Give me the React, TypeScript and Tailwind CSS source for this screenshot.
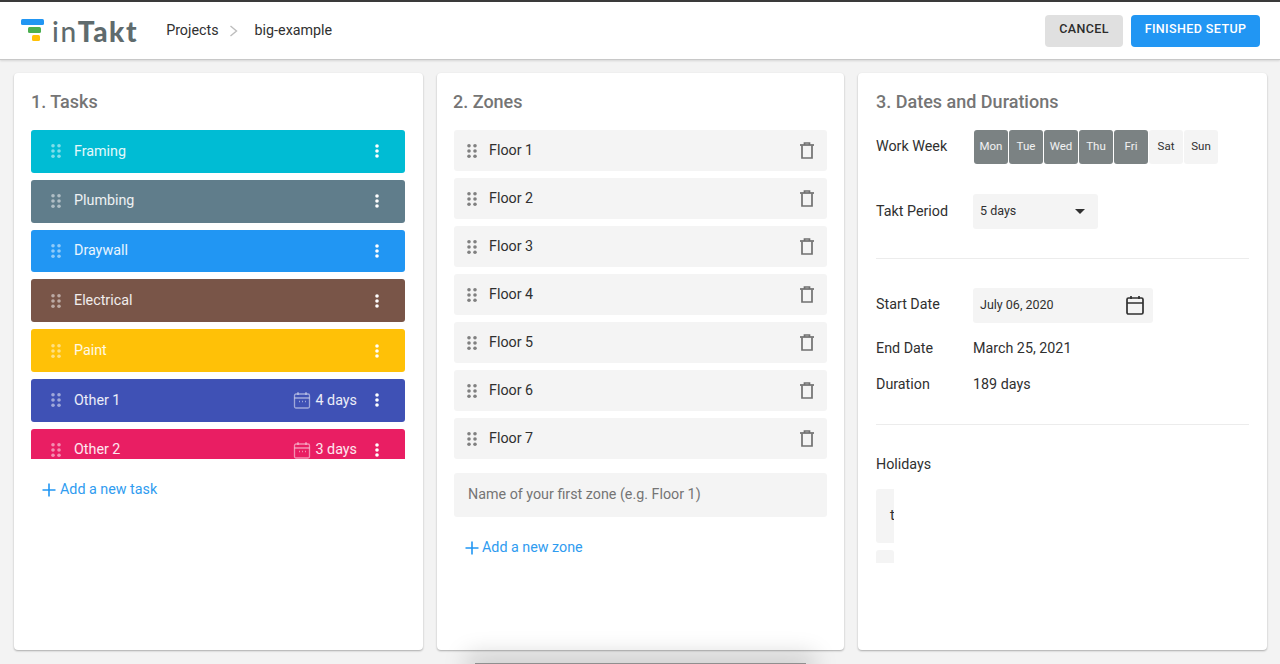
import React from "react";

const tasks = [
  { name: "Framing", color: "bg-[#00bcd4]" },
  { name: "Plumbing", color: "bg-[#607d8b]" },
  { name: "Draywall", color: "bg-[#2196f3]" },
  { name: "Electrical", color: "bg-[#795548]" },
  { name: "Paint", color: "bg-[#ffc107]" },
  { name: "Other 1", color: "bg-[#3f51b5]", days: "4 days" },
  { name: "Other 2", color: "bg-[#e91e63]", days: "3 days" },
];
const floors = ["Floor 1", "Floor 2", "Floor 3", "Floor 4", "Floor 5", "Floor 6", "Floor 7"];
const days = [
  ["Mon", true], ["Tue", true], ["Wed", true], ["Thu", true], ["Fri", true], ["Sat", false], ["Sun", false],
] as const;

function Grip({ className }: { className: string }) {
  return (
    <svg width="10" height="14" viewBox="0 0 10 14" className={className} fill="currentColor">
      {[1.8, 7, 12.2].map((y) => (
        <g key={y}>
          <circle cx="2" cy={y} r="1.8" />
          <circle cx="8" cy={y} r="1.8" />
        </g>
      ))}
    </svg>
  );
}

function Kebab() {
  return (
    <svg width="4" height="14" viewBox="0 0 4 14" fill="white" className="shrink-0">
      <circle cx="2" cy="2" r="1.8" />
      <circle cx="2" cy="7" r="1.8" />
      <circle cx="2" cy="12" r="1.8" />
    </svg>
  );
}

function SmallCal() {
  return (
    <svg width="18" height="18" viewBox="0 0 18 18" fill="none" stroke="currentColor" strokeWidth="1.3" className="text-white/50 shrink-0">
      <rect x="1.5" y="3" width="15" height="14" rx="1.5" />
      <path d="M1.5 7h15M5 1v3M13 1v3" />
      <path d="M6 10.5h1M9 10.5h1M12 10.5h1" />
    </svg>
  );
}

function Trash() {
  return (
    <svg width="14" height="17" viewBox="0 0 14 17" fill="none" stroke="#707070" strokeWidth="1.7" className="shrink-0">
      <path d="M0 3h14" />
      <path d="M4.5 3V1h5v2" />
      <path d="M2 3.5V16h10V3.5" />
    </svg>
  );
}

function Plus() {
  return (
    <svg width="14" height="14" viewBox="0 0 14 14" stroke="#2196f3" strokeWidth="1.6" className="shrink-0">
      <path d="M7 0.5v13M0.5 7h13" />
    </svg>
  );
}

export default function App() {
  return (
    <div className="relative h-[664px] w-[1280px] overflow-hidden bg-[#f3f3f3] font-['Roboto',sans-serif] text-[#303030]">
      <header className="flex h-[60px] items-center justify-between border-t-2 border-b border-t-[#3a3a3a] border-b-[#c8c8c8] bg-white pl-[21px] pr-[20px] shadow-[0_1px_2px_rgba(0,0,0,0.12)]">
        <div className="flex items-center">
          <svg width="24" height="22" viewBox="0 0 24 22" className="shrink-0 -translate-y-[1px]">
            <rect x="0" y="0" width="23" height="6" rx="1.5" fill="#2196f3" />
            <rect x="7" y="8" width="13" height="6" rx="1.5" fill="#4caf50" />
            <rect x="11" y="16" width="8" height="6" rx="1.5" fill="#ffc107" />
          </svg>
          <span className="ml-[7px] font-['Lato',sans-serif] text-[28px] leading-none font-medium tracking-[1.6px] text-[#5f6b6d]">
            in<span className="font-black">Takt</span>
          </span>
          <span className="ml-[28px] text-[14.3px]">Projects</span>
          <svg width="10" height="12" viewBox="0 0 10 12" fill="none" stroke="#bdbdbd" strokeWidth="1.4" className="ml-[10px]">
            <path d="M1.5 1l6 5-6 5" />
          </svg>
          <span className="ml-[16px] text-[14.3px]">big-example</span>
        </div>
        <div className="flex items-center gap-2">
          <button className="h-[32px] w-[78px] rounded bg-[#e0e0e0] pb-[2px] text-[12.5px] font-medium tracking-[0.4px] text-[#2c2c2c]">CANCEL</button>
          <button className="h-[32px] w-[129px] rounded bg-[#2196f3] pb-[2px] text-[12.5px] font-medium tracking-[0.4px] text-white">FINISHED SETUP</button>
        </div>
      </header>

      <main className="flex gap-[14px] pl-[14px] pt-[13px]">
        <section className="h-[577px] w-[409px] rounded bg-white pl-[17px] pr-[18px] pt-[17px] shadow-[0_1px_2px_rgba(0,0,0,0.3)]">
          <h2 className="h-[40px] text-[18px] font-medium leading-[23px] text-[#757575]">1. Tasks</h2>
          <div className="h-[329px] overflow-hidden">
            <div className="flex flex-col gap-[7px]">
              {tasks.map((t) => (
                <div key={t.name} className={`flex h-[42.8px] shrink-0 items-center rounded-[3px] pl-[20px] pr-[26px] text-[14.3px] text-white/90 ${t.color}`}>
                  <Grip className="text-white/50" />
                  <span className="ml-[13px] flex-1">{t.name}</span>
                  {t.days && (
                    <span className="mr-[18px] flex items-center gap-[5px]">
                      <SmallCal />
                      {t.days}
                    </span>
                  )}
                  <Kebab />
                </div>
              ))}
            </div>
          </div>
          <div className="ml-[11px] mt-[20px] flex items-center gap-[4px] text-[14.3px] text-[#2f9cf0]">
            <Plus />
            Add a new task
          </div>
        </section>

        <section className="h-[577px] w-[407px] rounded bg-white px-[17px] pt-[17px] shadow-[0_1px_2px_rgba(0,0,0,0.3)]">
          <h2 className="-ml-px h-[40px] text-[18px] font-medium leading-[23px] text-[#757575]">2. Zones</h2>
          <div className="flex flex-col gap-[7px]">
            {floors.map((f) => (
              <div key={f} className="flex h-[41px] items-center rounded-[3px] bg-[#f4f4f4] pl-[13px] pr-[13px] text-[14.3px]">
                <Grip className="text-[#808080]" />
                <span className="ml-[12px] flex-1">{f}</span>
                <Trash />
              </div>
            ))}
          </div>
          <div className="mt-[14px] flex h-[44px] items-center rounded-[3px] bg-[#f4f4f4] pl-[14px] text-[14.3px] text-[#757575]">
            Name of your first zone (e.g. Floor 1)
          </div>
          <div className="ml-[11px] mt-[20px] flex items-center gap-[3px] text-[14.3px] text-[#2f9cf0]">
            <Plus />
            Add a new zone
          </div>
        </section>

        <section className="h-[577px] w-[409px] rounded bg-white px-[18px] pt-[17px] shadow-[0_1px_2px_rgba(0,0,0,0.3)]">
          <h2 className="h-[40px] text-[18px] font-medium leading-[23px] text-[#757575]">3. Dates and Durations</h2>
          <div className="flex items-start">
            <span className="w-[98px] pt-[6px] text-[14.3px] leading-[20px]">Work Week</span>
            <div className="flex gap-[1px]">
              {days.map(([d, on]) => (
                <span key={d} className={`flex h-[34px] w-[34px] items-center justify-center rounded-[3px] text-[11.5px] ${on ? "bg-[#7b8283] text-white/90" : "bg-[#f4f4f4] text-[#303030]"}`}>{d}</span>
              ))}
            </div>
          </div>
          <div className="mt-[30px] flex items-start">
            <span className="w-[97px] pt-[7px] text-[14.3px] leading-[20px]">Takt Period</span>
            <div className="flex h-[35px] w-[125px] items-center justify-between rounded-[3px] bg-[#f4f4f4] pl-[7px] pr-[13px] text-[12.5px]">
              5 days
              <svg width="10" height="5" viewBox="0 0 10 5" fill="#303030"><path d="M0 0h10L5 5z" /></svg>
            </div>
          </div>
          <div className="mt-[29px] h-px bg-[#ececec]" />
          <div className="mt-[29px] flex items-start">
            <span className="w-[97px] pt-[6px] text-[14.3px] leading-[20px]">Start Date</span>
            <div className="flex h-[35px] w-[180px] items-center justify-between rounded-[3px] bg-[#f4f4f4] pl-[7px] pr-[8px] text-[12.5px]">
              July 06, 2020
              <svg width="20" height="21" viewBox="0 0 20 21" fill="none" stroke="#303030" strokeWidth="1.7">
                <rect x="2" y="3" width="16" height="16" rx="1.5" />
                <path d="M2 8h16M6 1v3M14 1v3" />
              </svg>
            </div>
          </div>
          <div className="mt-[15px] flex text-[14.3px] leading-[20px]">
            <span className="w-[97px]">End Date</span>
            <span>March 25, 2021</span>
          </div>
          <div className="mt-[16px] flex text-[14.3px] leading-[20px]">
            <span className="w-[97px]">Duration</span>
            <span>189 days</span>
          </div>
          <div className="mt-[30px] h-px bg-[#ececec]" />
          <div className="mt-[29px] text-[14.3px] leading-[20px]">Holidays</div>
          <div className="mt-[15px] flex h-[54px] w-[18px] items-center justify-start overflow-hidden rounded-l-[3px] bg-[#f4f4f4] pl-[14px] text-[14.3px]">t</div>
          <div className="mt-[7px] h-[13px] w-[18px] rounded-t-[3px] bg-[#f4f4f4]" />
        </section>
      </main>

      <div className="absolute bottom-[-4px] left-[475px] h-[5px] w-[331px] bg-[#8f8f8f] shadow-[0_0_24px_8px_rgba(0,0,0,0.18)]" />
    </div>
  );
}
